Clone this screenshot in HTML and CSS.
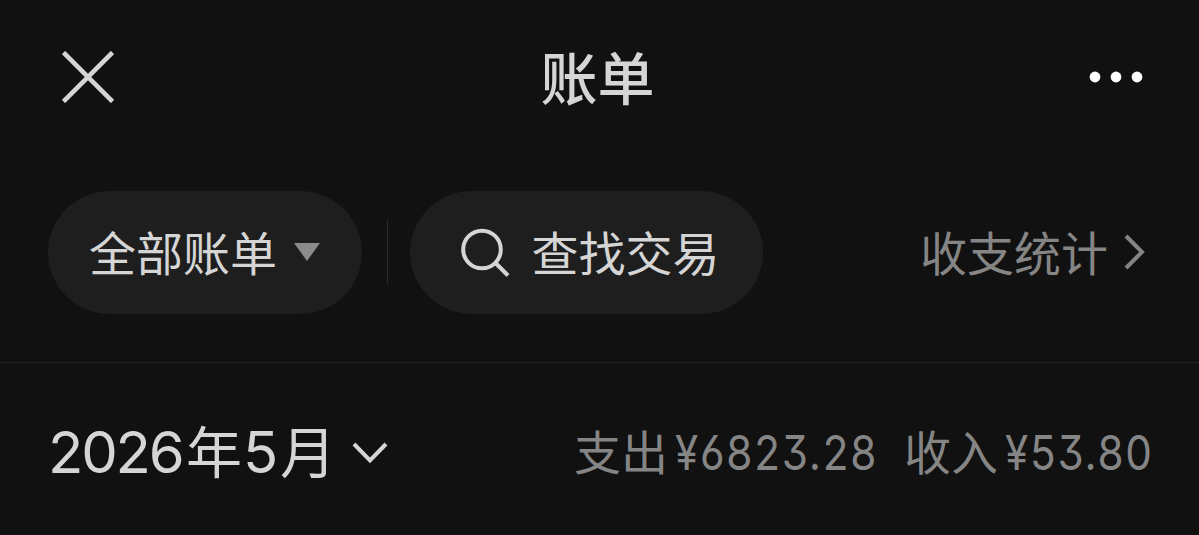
FILE: index.html
```html
<!DOCTYPE html>
<html lang="zh-CN">
<head>
  <meta charset="UTF-8">
  <meta name="viewport" content="width=device-width, initial-scale=1.0">
  <title>账单</title>
  <link rel="stylesheet" href="styles.css">
</head>
<body>
  <header class="navbar">
    <svg class="close" viewBox="0 0 52 52"><path d="M1.5 1.5 50.5 50.5M50.5 1.5 1.5 50.5"/></svg>
    <h1>账单</h1>
    <svg class="more" viewBox="0 0 54 12"><circle cx="6" cy="6" r="5.4"/><circle cx="27" cy="6" r="5.4"/><circle cx="48" cy="6" r="5.4"/></svg>
  </header>

  <!-- Filters -->
  <section class="filters">
    <div class="pill pill-type">
      <span>全部账单</span>
      <svg class="triangle" viewBox="0 0 26 18"><path d="M0 0H26L13 18Z"/></svg>
    </div>
    <div class="divider"></div>
    <div class="pill pill-search">
      <svg class="search" viewBox="0 0 50 50"><circle cx="22" cy="22.5" r="18.8"/><path d="M35.5 36 48 48.5"/></svg>
      <span>查找交易</span>
    </div>
    <div class="stats">
      <span>收支统计</span>
      <svg class="arrow-right" viewBox="0 0 21 36"><path d="M2 2 18 18 2 34"/></svg>
    </div>
  </section>

  <!-- Month summary -->
  <main class="summary">
    <div class="month">
      <span class="year">2026</span><span class="unit">年</span><span class="month-num">5</span><span class="unit">月</span>
      <svg class="arrow-down" viewBox="0 0 36 22"><path d="M2 2 18 18.5 34 2"/></svg>
    </div>
    <div class="totals">
      <span class="label">支出</span><span class="amount expense">¥6823.28</span>
      <span class="label">收入</span><span class="amount income">¥53.80</span>
    </div>
  </main>
</body>
</html>
```

FILE: styles.css
```css
* {
  box-sizing: border-box;
}

body {
  margin: 0;
  height: 535px;
  overflow: hidden;
  background-color: #111;
  color: #d5d5d5;
  font-family: "Noto Sans CJK SC", sans-serif;
  font-size: 47px;
  line-height: 60px;
  white-space: nowrap;
}

svg {
  display: block;
  flex: none;
  fill: none;
  stroke: #d5d5d5;
  stroke-width: 4;
}

/* Navbar */
.navbar {
  display: grid;
  grid-template-columns: 1fr auto 1fr;
  align-items: center;
  height: 154px;
  padding: 0 56px 0 62px;
}

.navbar h1 {
  margin: 0;
  padding: 0 10px 4px 0;
  font-size: 57px;
  font-weight: 500;
}

.close {
  width: 52px;
  height: 52px;
  stroke-width: 4.6;
}

.more {
  width: 54px;
  height: 12px;
  justify-self: end;
  fill: #fff;
  stroke: none;
}

/* Filters */
.filters {
  display: flex;
  align-items: center;
  height: 209px;
  padding: 0 54px 12px 48px;
  border-bottom: 1px solid #222;
}

.filters span {
  padding-bottom: 2px;
}

.pill {
  display: flex;
  align-items: center;
  height: 123px;
  border-radius: 62px;
  background-color: #1e1e1e;
}

.pill-type {
  width: 314px;
  padding-left: 41px;
  gap: 17px;
}

.triangle {
  width: 26px;
  height: 18px;
  fill: #8b8b8b;
  stroke: none;
}

.divider {
  width: 1px;
  height: 64px;
  margin: 0 21.5px 0 25px;
  background-color: #2b2b2b;
}

.pill-search {
  width: 353px;
  padding-left: 50px;
  gap: 22px;
}

.search {
  width: 50px;
  height: 50px;
}

.stats {
  display: flex;
  align-items: center;
  gap: 16px;
  margin-left: auto;
  color: #858585;
}

.arrow-right {
  width: 21px;
  height: 36px;
  stroke: #858585;
}

/* Month summary */
.summary {
  display: flex;
  align-items: center;
  justify-content: space-between;
  height: 180px;
  padding: 0 49px 0 48px;
}

.month {
  display: flex;
  align-items: center;
  font-size: 56px;
}

.unit {
  padding-bottom: 9px;
}

.year,
.month-num {
  padding-bottom: 3px;
  font-family: Inter, sans-serif;
  font-size: 58px;
  letter-spacing: -2.2px;
}

.year {
  width: 138px;
}

.month-num {
  width: 38px;
  padding-left: 1px;
}

.arrow-down {
  width: 36px;
  height: 22px;
  margin-left: 16px;
}

.totals {
  display: flex;
  align-items: center;
  color: #858585;
}

.label {
  padding-bottom: 6px;
}

/* Condensed numerals */
.amount {
  margin-left: 7px;
  font-family: Inter, sans-serif;
  font-size: 48px;
  letter-spacing: 2px;
  font-feature-settings: "cv03", "cv09";
  transform: scaleX(.88);
  transform-origin: left;
}

.expense {
  width: 229px;
}

.income {
  width: 145px;
}
```
